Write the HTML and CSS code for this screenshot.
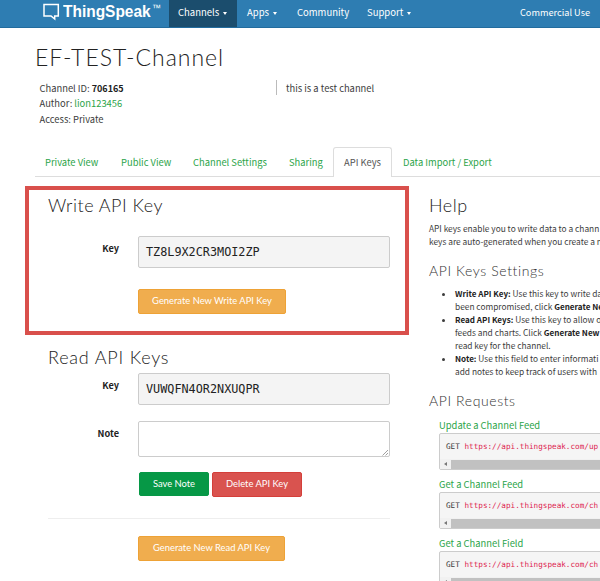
FILE: index.html
```html
<!DOCTYPE html>
<html lang="en">
<head>
<meta charset="utf-8">
<title>API Keys - ThingSpeak</title>
<link rel="stylesheet" href="styles.css">
</head>
<body>
<nav class="navbar">
  <a class="brand"><svg width="17" height="18" viewBox="0 0 17 18"><path d="M1 1.5H15.3V13H11.7V16L8 13H1Z" fill="none" stroke="#fff" stroke-width="1.5"/></svg><span class="brand-name">ThingSpeak</span><span class="tm">™</span></a>
  <a class="nav-item active"><span>Channels</span><i class="caret"></i></a>
  <a class="nav-item apps"><span>Apps</span><i class="caret"></i></a>
  <a class="nav-item community"><span>Community</span></a>
  <a class="nav-item support"><span>Support</span><i class="caret"></i></a>
  <a class="nav-item commercial"><span>Commercial Use</span></a>
</nav>
<header class="channel">
  <h1>EF-TEST-Channel</h1>
  <div class="meta">
    <div class="facts">
      <div>Channel ID: <b>706165</b></div>
      <div>Author: <a>lion123456</a></div>
      <div>Access: Private</div>
    </div>
    <div class="description">this is a test channel</div>
  </div>
</header>
<div class="tabs">
  <a class="tab private">Private View</a>
  <a class="tab public">Public View</a>
  <a class="tab settings">Channel Settings</a>
  <a class="tab sharing">Sharing</a>
  <a class="tab current">API Keys</a>
  <a class="tab data">Data Import / Export</a>
</div>
<main class="columns">
  <div class="keys">
    <section class="write">
      <h2>Write API Key</h2>
      <div class="row"><label>Key</label><div class="field">TZ8L9X2CR3MOI2ZP</div></div>
      <button class="btn orange">Generate New Write API Key</button>
    </section>
    <section class="read">
      <h2>Read API Keys</h2>
      <div class="row"><label>Key</label><div class="field">VUWQFN4OR2NXUQPR</div></div>
      <div class="row note"><label>Note</label><div class="field area"><svg class="grip" width="7" height="7" viewBox="0 0 7 7"><path d="M0.5 6.5L6 1M3.5 6.5L6 4" stroke="#888" stroke-width=".8"/></svg></div></div>
      <div class="actions"><button class="btn green">Save Note</button><button class="btn red">Delete API Key</button></div>
      <hr>
      <button class="btn orange second">Generate New Read API Key</button>
    </section>
  </div>
  <aside class="help">
    <h2>Help</h2>
    <p>API keys enable you to write data to a chann<br>keys are auto-generated when you create a n</p>
    <h3 class="first">API Keys Settings</h3>
    <ul>
      <li><b>Write API Key:</b> Use this key to write da<br>been compromised, click <b>Generate Ne</b></li>
      <li><b>Read API Keys:</b> Use this key to allow o<br>feeds and charts. Click <b>Generate New</b><br>read key for the channel.</li>
      <li><b>Note:</b> Use this field to enter informati<br>add notes to keep track of users with</li>
    </ul>
    <h3 class="second">API Requests</h3>
    <div class="request">
      <a>Update a Channel Feed</a>
      <div class="code"><div class="line">GET <em>https://api.thingspeak.com/up</em></div><div class="scroll"><i></i><b></b></div></div>
    </div>
    <div class="request">
      <a>Get a Channel Feed</a>
      <div class="code"><div class="line">GET <em>https://api.thingspeak.com/ch</em></div><div class="scroll"><i></i><b></b></div></div>
    </div>
    <div class="request">
      <a>Get a Channel Field</a>
      <div class="code"><div class="line">GET <em>https://api.thingspeak.com/ch</em></div><div class="scroll"><i></i><b></b></div></div>
    </div>
  </aside>
</main>
</body>
</html>
```
FILE: styles.css
```css
* { box-sizing: border-box; }
html, body { margin: 0; width: 600px; height: 581px; overflow: hidden; background: #fff; }
body { font: 9.4px/15px "Noto Sans CJK SC", "Noto Sans", sans-serif; color: #3c3c3c; white-space: nowrap; }
a { color: #2ca449; }
h1, h2, h3, p, ul { margin: 0; font-weight: 300; }
h1, h2, h3 { font-family: Lato, sans-serif; color: #222; }

.navbar { display: flex; height: 28px; background: #2e7db2; border-bottom: 1px solid #226c9e; overflow: hidden; }
.navbar a { flex: none; color: #fff; }
.navbar .brand { display: flex; width: 169px; padding: 3px 0 0 43px; }
.brand-name { width: 89px; margin-left: 3px; font: bold 17px/18px "Liberation Sans", sans-serif; transform: scaleX(.91); transform-origin: left; }
.tm { font: 9px/9px "Liberation Sans", sans-serif; margin-top: 1px; }
.nav-item { display: flex; align-items: center; height: 25px; font-size: 9.5px; }
.nav-item.active { width: 68px; height: 28px; padding: 0 0 3px 9px; background: #1b4d6d; }
.apps { padding-left: 10px; width: 60px; }
.community { width: 70px; }
.support { width: 153px; }
.nav-item.commercial { font-size: 9.2px; }
.caret { margin: 2px 0 0 4px; border: 2.5px solid transparent; border-top: 3px solid #fff; border-bottom: 0; }

.channel { height: 119px; padding: 14px 0 0 35px; }
h1 { height: 37px; font-size: 23px; line-height: 30px; letter-spacing: 1px; }
.meta { display: flex; }
.facts { width: 241px; padding: 1px 0 0 4.5px; }
.facts div { height: 15.3px; line-height: 16px; }
.facts b { color: #222; font-size: 9px; }
.description { height: 15px; line-height: 16px; border-left: 1px solid #bbb; padding-left: 9px; margin-top: 1px; }

.tabs { display: flex; height: 30px; margin-left: 35px; border-bottom: 1px solid #ddd; }
.tab { padding: 8px 0 0 10px; }
.private { width: 76px; }
.public { width: 72px; }
.settings { width: 96px; }
.sharing { width: 54px; }
.tab.current { width: 59px; height: 30px; padding-top: 7px; border: 1px solid #ddd; border-bottom: 0; border-radius: 3px 3px 0 0; background: #fff; color: #555; }
.tab.data { padding-left: 11px; }

.columns { display: flex; padding-top: 9px; }
.keys { width: 384px; margin-left: 25px; }
.write { height: 149px; border: 4px solid #d9504c; padding: 3px 0 0 19px; }
h2 { font-size: 18px; line-height: 24px; letter-spacing: .5px; }
.row { display: flex; }
label { width: 71px; text-align: right; font-weight: bold; font-size: 9.2px; color: #222; padding-top: 5px; }
.field { width: 252px; height: 32px; margin-left: 19px; padding-left: 7px; border: 1px solid #ccc; border-radius: 2px; background: #f4f4f4; font: 11.8px/31px "DejaVu Sans Mono", monospace; color: #222; }
.write .row { margin-top: 19px; }
.btn { display: block; height: 25px; padding: 0 0 1px; border: 1px solid #eea236; border-radius: 2px; background: #f0ad4e; color: #fff; font: 9.4px/22px Lato, sans-serif; white-space: nowrap; }
.write .btn { width: 148px; margin: 21px 0 0 90px; }
.read { padding: 10px 0 0 23px; }
.read h2 { height: 28px; letter-spacing: .8px; }
.note { margin-top: 16px; }
.area { display: flex; justify-content: flex-end; align-items: flex-end; height: 36px; padding: 0; background: #fff; }
.actions { display: flex; gap: 3px; margin: 15px 0 0 91px; }
.btn.green { width: 70px; height: 24px; background: #069846; border-color: #069846; }
.btn.red { width: 90px; background: #d9534f; border-color: #d43f3a; }
hr { width: 342px; height: 1px; margin: 21px 0 17px; border: 0; background: #eee; }
.btn.second { width: 147px; margin-left: 90px; }

.help { width: 191px; padding: 7px 0 0 20px; font-size: 8.35px; line-height: 13px; overflow: hidden; }
.help p { margin-top: 5px; font-weight: 400; }
h3 { font-size: 14px; line-height: 20px; letter-spacing: .6px; color: #333; }
h3.first { margin-top: 13px; }
ul { padding-left: 26px; margin-top: 6px; font-weight: 400; }
ul b { color: #222; font-size: 8.1px; }
h3.second { margin-top: 13px; }
.request { width: 220px; height: 59.2px; padding-left: 10px; }
.request a { display: block; height: 16px; font-size: 9.4px; line-height: 17px; }
h3.second + .request { margin-top: 6px; }
.code { height: 37px; border: 1px solid #ccc; border-radius: 2px; background: #f5f5f5; }
.line { height: 25px; padding-left: 6px; font: 7.67px/25px "DejaVu Sans Mono", monospace; }
.line em { font-style: normal; color: #dd1f50; }
.scroll { display: flex; height: 10px; align-items: center; background: #f1f1f1; }
.scroll i { width: 3px; margin: 0 4px; border: 2.5px solid transparent; border-left: 0; border-right: 3px solid #777; }
.scroll b { flex: 1; height: 9px; background: #c1c1c1; }
```
